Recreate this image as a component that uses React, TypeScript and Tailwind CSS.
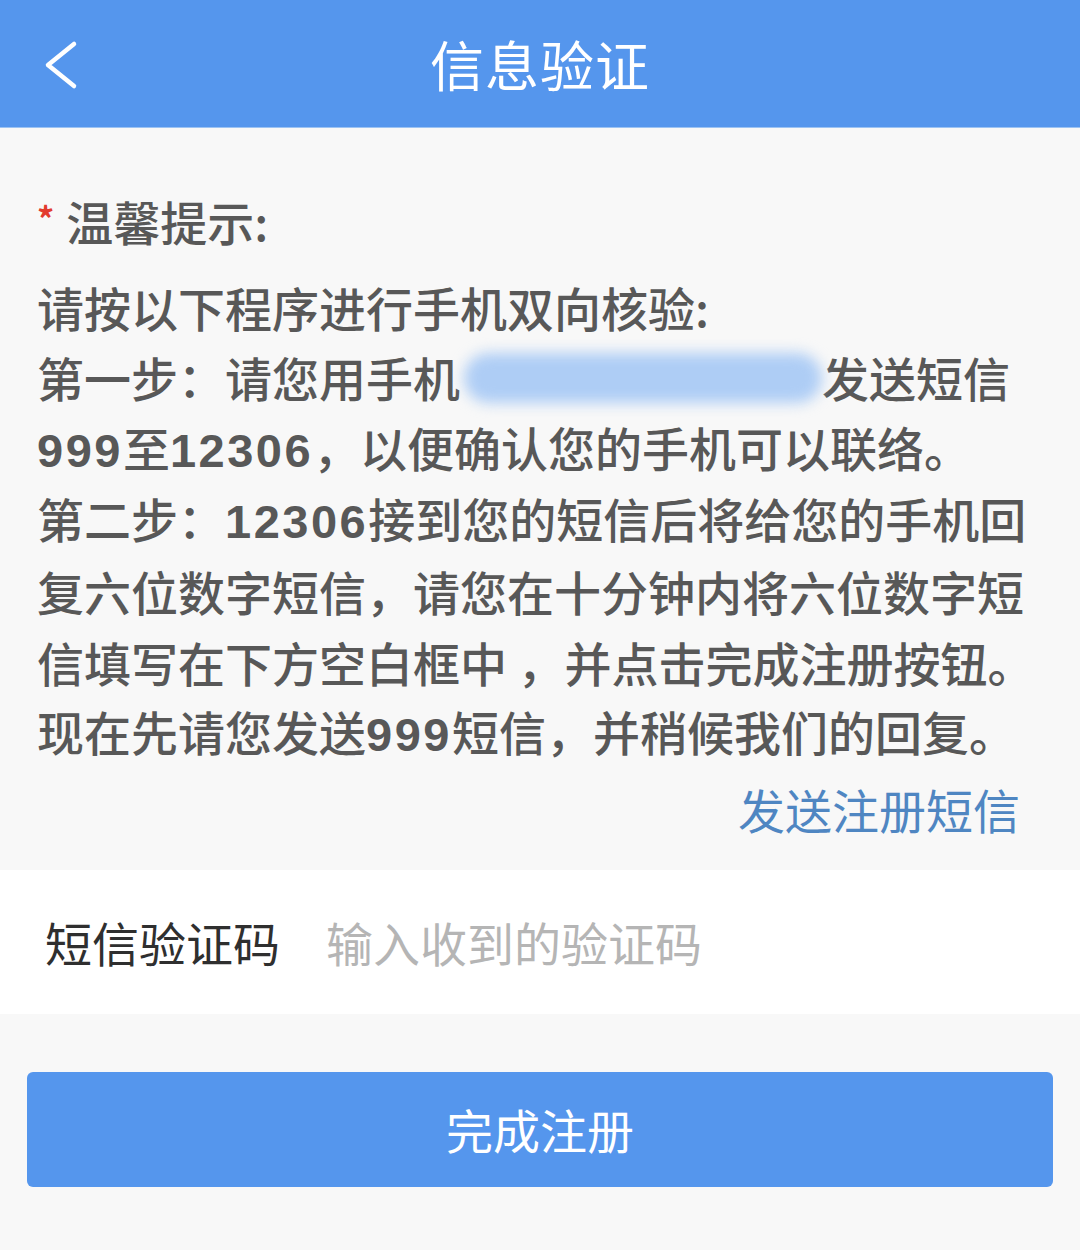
const font = { fontFamily: '"Noto Sans CJK SC", "Noto Sans", sans-serif' };

const lines = [
  '请按以下程序进行手机双向核验:',
  null,
  '999至12306，以便确认您的手机可以联络。',
  '第二步：12306接到您的短信后将给您的手机回',
  '复六位数字短信，请您在十分钟内将六位数字短',
  '信填写在下方空白框中 ，并点击完成注册按钮。',
  '现在先请您发送999短信，并稍候我们的回复。',
];

// digits in the original render in a wider, bolder latin face
function Mixed({ text }: { text: string }) {
  return (
    <>
      {text.split(/(\d+)/).map((part, i) =>
        /^\d+$/.test(part) ? (
          <span
            key={i}
            className="font-bold tracking-[2.5px]"
            style={{ fontFamily: '"Liberation Sans", Arial, sans-serif' }}
          >
            {part}
          </span>
        ) : (
          <span key={i}>{part}</span>
        )
      )}
    </>
  );
}

export default function App() {
  return (
    <div className="min-h-[1250px] w-[1080px] bg-[#f8f8f8]" style={font}>
      <header className="relative flex h-[128px] items-center justify-center border-b border-[#9cc3f3] bg-[#5596ed]">
        <svg className="absolute left-[40px] top-[40px]" width="40" height="50" viewBox="0 0 40 50" fill="none">
          <path d="M34 4 L8 25 L34 46" stroke="#ffffff" strokeWidth="4.5" strokeLinecap="round" strokeLinejoin="round" />
        </svg>
        <h1 className="text-[54px] font-normal leading-none tracking-[1px] text-white">信息验证</h1>
      </header>

      <section className="px-[37px] pt-[65px] pb-[31px] text-[#585858]">
        <div className="flex items-center text-[47px] font-medium leading-[56px]">
          <span className="mr-[12px] mt-[-6px] text-[34px] font-bold text-[#e23b2e]">*</span>
          <span>温馨提示:</span>
        </div>
        <div className="mt-[22px] text-[47px] font-medium">
          {lines.map((line, i) =>
            line === null ? (
              <div key={i} className="flex h-[71px] items-center whitespace-nowrap">
                <span>第一步：请您用手机</span>
                <span className="ml-[4px] inline-block h-[50px] w-[358px] rounded-full bg-[#aecdf5] blur-[7px]" />
                <span>发送短信</span>
              </div>
            ) : (
              <div key={i} className="flex h-[71px] items-center whitespace-nowrap">
                <span className="leading-none">
                  <Mixed text={line} />
                </span>
              </div>
            )
          )}
        </div>
        <div className="mt-[11px] pr-[23px] text-right text-[47px] leading-[60px] text-[#4f86c2]">
          发送注册短信
        </div>
      </section>

      <div className="flex h-[144px] items-center bg-white px-[45px]">
        <span className="text-[47px] text-[#2f2f2f]">短信验证码</span>
        <input
          className="ml-[46px] flex-1 bg-transparent text-[47px] text-[#333] outline-none placeholder:text-[#b5b5b5]"
          style={font}
          placeholder="输入收到的验证码"
        />
      </div>

      <div className="px-[27px] pt-[58px]">
        <button
          className="flex h-[115px] w-full items-center justify-center rounded-[6px] bg-[#5596ed] text-[47px] text-white"
          style={font}
        >
          完成注册
        </button>
      </div>
    </div>
  );
}
